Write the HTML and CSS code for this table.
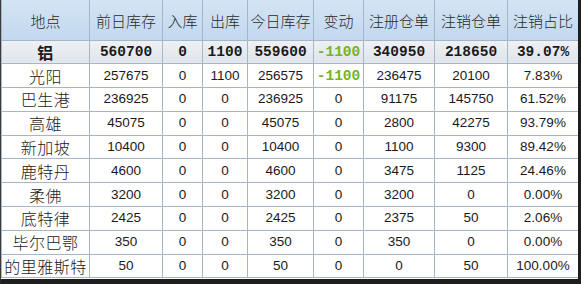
FILE: index.html
```html
<!DOCTYPE html>
<html lang="zh-CN">

<head>
    <meta charset="UTF-8">
    <meta name="viewport" content="width=device-width, initial-scale=1.0">
    <title>库存</title>
    <link rel="stylesheet" href="styles.css">
</head>

<body>
    <div class="frame">
        <table class="stock">
            <colgroup>
                <col class="col-place">
                <col class="col-prev">
                <col class="col-in">
                <col class="col-out">
                <col class="col-today">
                <col class="col-diff">
                <col class="col-reg">
                <col class="col-cancel">
                <col class="col-ratio">
            </colgroup>
            <thead>
                <tr>
                    <th>地点</th>
                    <th>前日库存</th>
                    <th>入库</th>
                    <th>出库</th>
                    <th>今日库存</th>
                    <th>变动</th>
                    <th>注册仓单</th>
                    <th>注销仓单</th>
                    <th>注销占比</th>
                </tr>
            </thead>
            <tbody>
                <tr class="stock__total">
                    <td class="stock__name">铝</td>
                    <td>560700</td>
                    <td>0</td>
                    <td>1100</td>
                    <td>559600</td>
                    <td class="stock__down">-1100</td>
                    <td>340950</td>
                    <td>218650</td>
                    <td>39.07%</td>
                </tr>
                <tr>
                    <td class="stock__name">光阳</td>
                    <td>257675</td>
                    <td>0</td>
                    <td>1100</td>
                    <td>256575</td>
                    <td class="stock__down">-1100</td>
                    <td>236475</td>
                    <td>20100</td>
                    <td>7.83%</td>
                </tr>
                <tr>
                    <td class="stock__name">巴生港</td>
                    <td>236925</td>
                    <td>0</td>
                    <td>0</td>
                    <td>236925</td>
                    <td>0</td>
                    <td>91175</td>
                    <td>145750</td>
                    <td>61.52%</td>
                </tr>
                <tr>
                    <td class="stock__name">高雄</td>
                    <td>45075</td>
                    <td>0</td>
                    <td>0</td>
                    <td>45075</td>
                    <td>0</td>
                    <td>2800</td>
                    <td>42275</td>
                    <td>93.79%</td>
                </tr>
                <tr>
                    <td class="stock__name">新加坡</td>
                    <td>10400</td>
                    <td>0</td>
                    <td>0</td>
                    <td>10400</td>
                    <td>0</td>
                    <td>1100</td>
                    <td>9300</td>
                    <td>89.42%</td>
                </tr>
                <tr>
                    <td class="stock__name">鹿特丹</td>
                    <td>4600</td>
                    <td>0</td>
                    <td>0</td>
                    <td>4600</td>
                    <td>0</td>
                    <td>3475</td>
                    <td>1125</td>
                    <td>24.46%</td>
                </tr>
                <tr>
                    <td class="stock__name">柔佛</td>
                    <td>3200</td>
                    <td>0</td>
                    <td>0</td>
                    <td>3200</td>
                    <td>0</td>
                    <td>3200</td>
                    <td>0</td>
                    <td>0.00%</td>
                </tr>
                <tr>
                    <td class="stock__name">底特律</td>
                    <td>2425</td>
                    <td>0</td>
                    <td>0</td>
                    <td>2425</td>
                    <td>0</td>
                    <td>2375</td>
                    <td>50</td>
                    <td>2.06%</td>
                </tr>
                <tr>
                    <td class="stock__name">毕尔巴鄂</td>
                    <td>350</td>
                    <td>0</td>
                    <td>0</td>
                    <td>350</td>
                    <td>0</td>
                    <td>350</td>
                    <td>0</td>
                    <td>0.00%</td>
                </tr>
                <tr>
                    <td class="stock__name">的里雅斯特</td>
                    <td>50</td>
                    <td>0</td>
                    <td>0</td>
                    <td>50</td>
                    <td>0</td>
                    <td>0</td>
                    <td>50</td>
                    <td>100.00%</td>
                </tr>
            </tbody>
        </table>
    </div>
</body>

</html>
```

FILE: styles.css
```css
* {
    margin: 0;
    padding: 0;
    box-sizing: border-box;
}

body {
    background: #1e1e1e;
    font-family: "Liberation Sans", "Noto Sans CJK SC", sans-serif;
    color: #1a1a1a;
}

.frame {
    width: 581px;
    height: 284px;
    background: #fff;
    border-left: 1px solid #3a3a3a;
    border-right: 3px solid #1e1e1e;
    border-bottom: 5px solid #1e1e1e;
    overflow: hidden;
}

.stock {
    width: 577px;
    table-layout: fixed;
    border-collapse: collapse;
    text-align: center;
}

.col-place { width: 88px; }
.col-prev { width: 73px; }
.col-in { width: 40px; }
.col-out { width: 45px; }
.col-today { width: 66px; }
.col-diff { width: 50px; }
.col-reg { width: 71px; }
.col-cancel { width: 73px; }
.col-ratio { width: 71px; }

.stock th,
.stock td {
    border: 1px solid #a6b6c6;
    white-space: nowrap;
    overflow: hidden;
}

.stock tr:first-child th {
    border-top: none;
}

.stock th {
    height: 40px;
    padding-top: 1px;
    font-family: "Noto Sans CJK SC", sans-serif;
    font-size: 15px;
    font-weight: 300;
    color: #2a2a2a;
    background: linear-gradient(#d3e4f4, #c2d8ee);
}

.stock td {
    height: 23.8px;
    font-size: 13.5px;
    line-height: 16px;
}

.stock__name {
    font-family: "Noto Sans CJK SC", sans-serif;
    font-size: 16px !important;
    font-weight: 300;
    letter-spacing: 0.5px;
}

.stock__total td {
    font-family: "Liberation Mono", "Noto Sans CJK SC", monospace;
    font-size: 14.5px;
    font-weight: bold;
    background: linear-gradient(#eef1f5, #dfe5ec);
}

.stock__total .stock__name {
    font-family: "Noto Sans CJK SC", sans-serif;
    font-weight: bold;
}

.stock__down {
    font-family: "Liberation Mono", monospace;
    font-size: 14.5px !important;
    font-weight: bold;
    color: #78b41c;
}
```
